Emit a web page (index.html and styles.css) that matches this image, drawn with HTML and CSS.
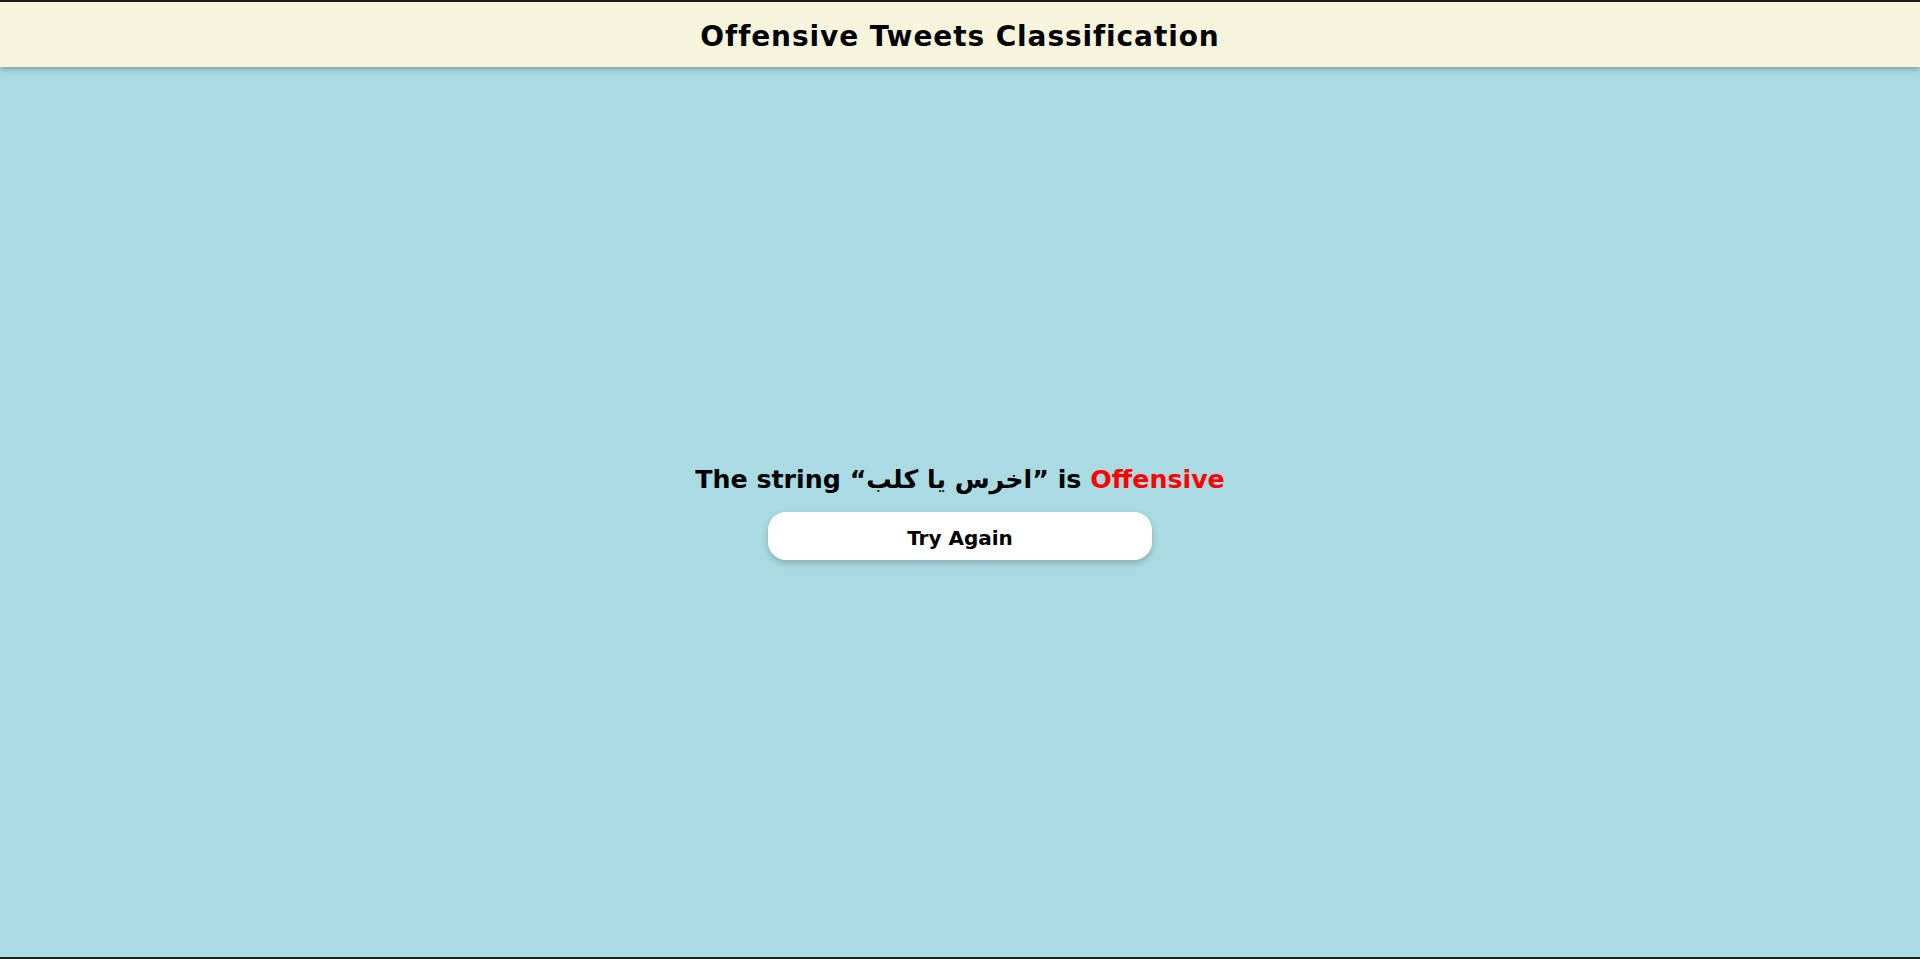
FILE: index.html
```html
<!DOCTYPE html>
<html lang="en">
<head>
<meta charset="utf-8">
<title>Offensive Tweets Classification</title>
<link rel="stylesheet" href="styles.css">
</head>
<body>
<header class="topbar">
  <h1 class="title">Offensive Tweets Classification</h1>
</header>
<main class="content">
  <div class="result">
    <h2 class="result-text">The string “<span class="ar" lang="ar">اخرس يا كلب</span>” is <span class="label">Offensive</span></h2>
    <button class="again" type="button">Try Again</button>
  </div>
</main>
<div class="bottom-strip"></div>
</body>
</html>
```
FILE: styles.css
```css
* { box-sizing: border-box; }
html, body { height: 100%; }
body {
  margin: 0;
  display: flex;
  flex-direction: column;
  background: #aadbe2;
  border-top: 2px solid #1d1d1d;
  font-family: "DejaVu Sans", "Noto Sans", sans-serif;
  color: #000;
}
.topbar {
  height: 65px;
  flex: 0 0 65px;
  background: #f6f5dc;
  display: flex;
  align-items: center;
  justify-content: center;
  padding-top: 4px;
  box-shadow: 0 2px 6px rgba(0, 0, 0, 0.3);
  position: relative;
  z-index: 1;
}
.title {
  margin: 0;
  font-size: 28px;
  font-weight: bold;
  letter-spacing: 0.9px;
}
.content {
  flex: 1;
  display: flex;
  align-items: center;
  justify-content: center;
}
.result {
  display: flex;
  flex-direction: column;
  align-items: center;
  gap: 17px;
}
.result-text {
  margin: 0;
  font-size: 25.3px;
  font-weight: bold;
  line-height: 1.25;
}
.ar { font-family: "DejaVu Sans", sans-serif; }
.label { color: #ff0000; }
.again {
  width: 384px;
  height: 48px;
  border: none;
  border-radius: 18px;
  background: #fff;
  box-shadow: 0 3px 6px rgba(0, 0, 0, 0.22);
  font-family: "DejaVu Sans", sans-serif;
  font-size: 20px;
  font-weight: bold;
  color: #000;
  padding-top: 4px;
  cursor: pointer;
}
.bottom-strip {
  height: 2px;
  flex: 0 0 2px;
  background: #1d1d1d;
}
```
